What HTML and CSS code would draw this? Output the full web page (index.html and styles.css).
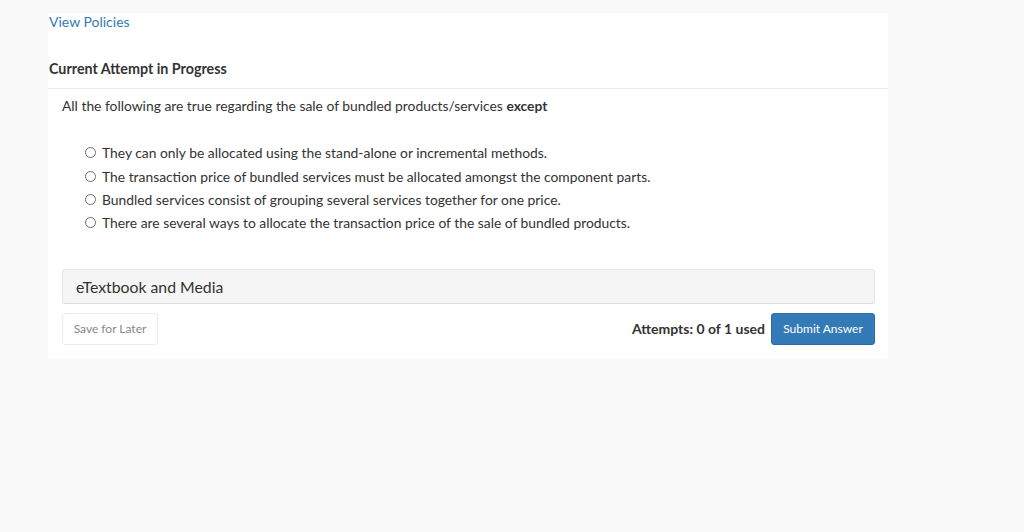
FILE: index.html
```html
<!DOCTYPE html>
<html lang="en">
<head>
<meta charset="utf-8">
<title>Current Attempt in Progress</title>
<link rel="stylesheet" href="styles.css">
</head>
<body>
<div class="page">
  <div class="card">
    <div class="policies"><a href="#" class="link">View Policies</a></div>
    <div class="attempt-header">Current Attempt in Progress</div>
    <div class="question">
      <p class="prompt">All the following are true regarding the sale of bundled products/services <b>except</b></p>
      <ul class="options">
        <li class="option"><span class="radio"></span><span>They can only be allocated using the stand-alone or incremental methods.</span></li>
        <li class="option"><span class="radio"></span><span>The transaction price of bundled services must be allocated amongst the component parts.</span></li>
        <li class="option"><span class="radio"></span><span>Bundled services consist of grouping several services together for one price.</span></li>
        <li class="option"><span class="radio"></span><span>There are several ways to allocate the transaction price of the sale of bundled products.</span></li>
      </ul>
      <div class="media-panel">eTextbook and Media</div>
      <div class="actions">
        <button class="btn btn-save">Save for Later</button>
        <div class="right">
          <span class="attempts">Attempts: 0 of 1 used</span>
          <button class="btn btn-submit">Submit Answer</button>
        </div>
      </div>
    </div>
  </div>
</div>
</body>
</html>
```

FILE: styles.css
```css
* { box-sizing: border-box; }
html, body {
  margin: 0;
  padding: 0;
  background: #f9f9f9;
  font-family: Lato, "Open Sans", Arial, sans-serif;
  color: #333;
}
.page {
  padding: 13px 0 0 48px;
}
.card {
  width: 840px;
  background: #fff;
  padding-bottom: 14px;
}
.policies {
  height: 18px;
  line-height: 18px;
  font-size: 14px;
  padding-left: 1px;
}
.link {
  color: #337ab7;
  text-decoration: none;
}
.attempt-header {
  padding: 29px 0 10px 1px;
  line-height: 18px;
  font-size: 14.3px;
  font-weight: 700;
  border-bottom: 1px solid #ececec;
}
.question {
  padding: 8px 13px 0 14px;
}
.prompt {
  margin: 0;
  font-size: 13.85px;
  line-height: 18px;
}
.options {
  list-style: none;
  margin: 26px 0 0 0;
  padding: 0 0 0 23px;
}
.option {
  display: flex;
  align-items: center;
  height: 23.4px;
  font-size: 13.85px;
}
.radio {
  width: 11px;
  height: 11px;
  border: 1px solid #707070;
  border-radius: 50%;
  margin-right: 6px;
  flex: none;
}
.media-panel {
  margin-top: 34px;
  height: 35px;
  line-height: 33px;
  background: #f5f5f5;
  border: 1px solid #e6e6e6;
  border-bottom-color: #dcdcdc;
  border-radius: 3px;
  padding-left: 13px;
  font-size: 15.8px;
}
.actions {
  margin-top: 9px;
  display: flex;
  justify-content: space-between;
  align-items: center;
}
.right {
  display: flex;
  align-items: center;
  gap: 6px;
}
.btn {
  font-family: inherit;
  font-size: 12px;
  height: 32px;
  border-radius: 3px;
  cursor: pointer;
}
.btn-save {
  width: 96px;
  background: #fff;
  color: #888;
  border: 1px solid #ececec;
}
.btn-submit {
  width: 104px;
  background: #337ab7;
  border: 1px solid #2e6da4;
  color: #fff;
}
.attempts {
  font-size: 14px;
  font-weight: 700;
}
```
